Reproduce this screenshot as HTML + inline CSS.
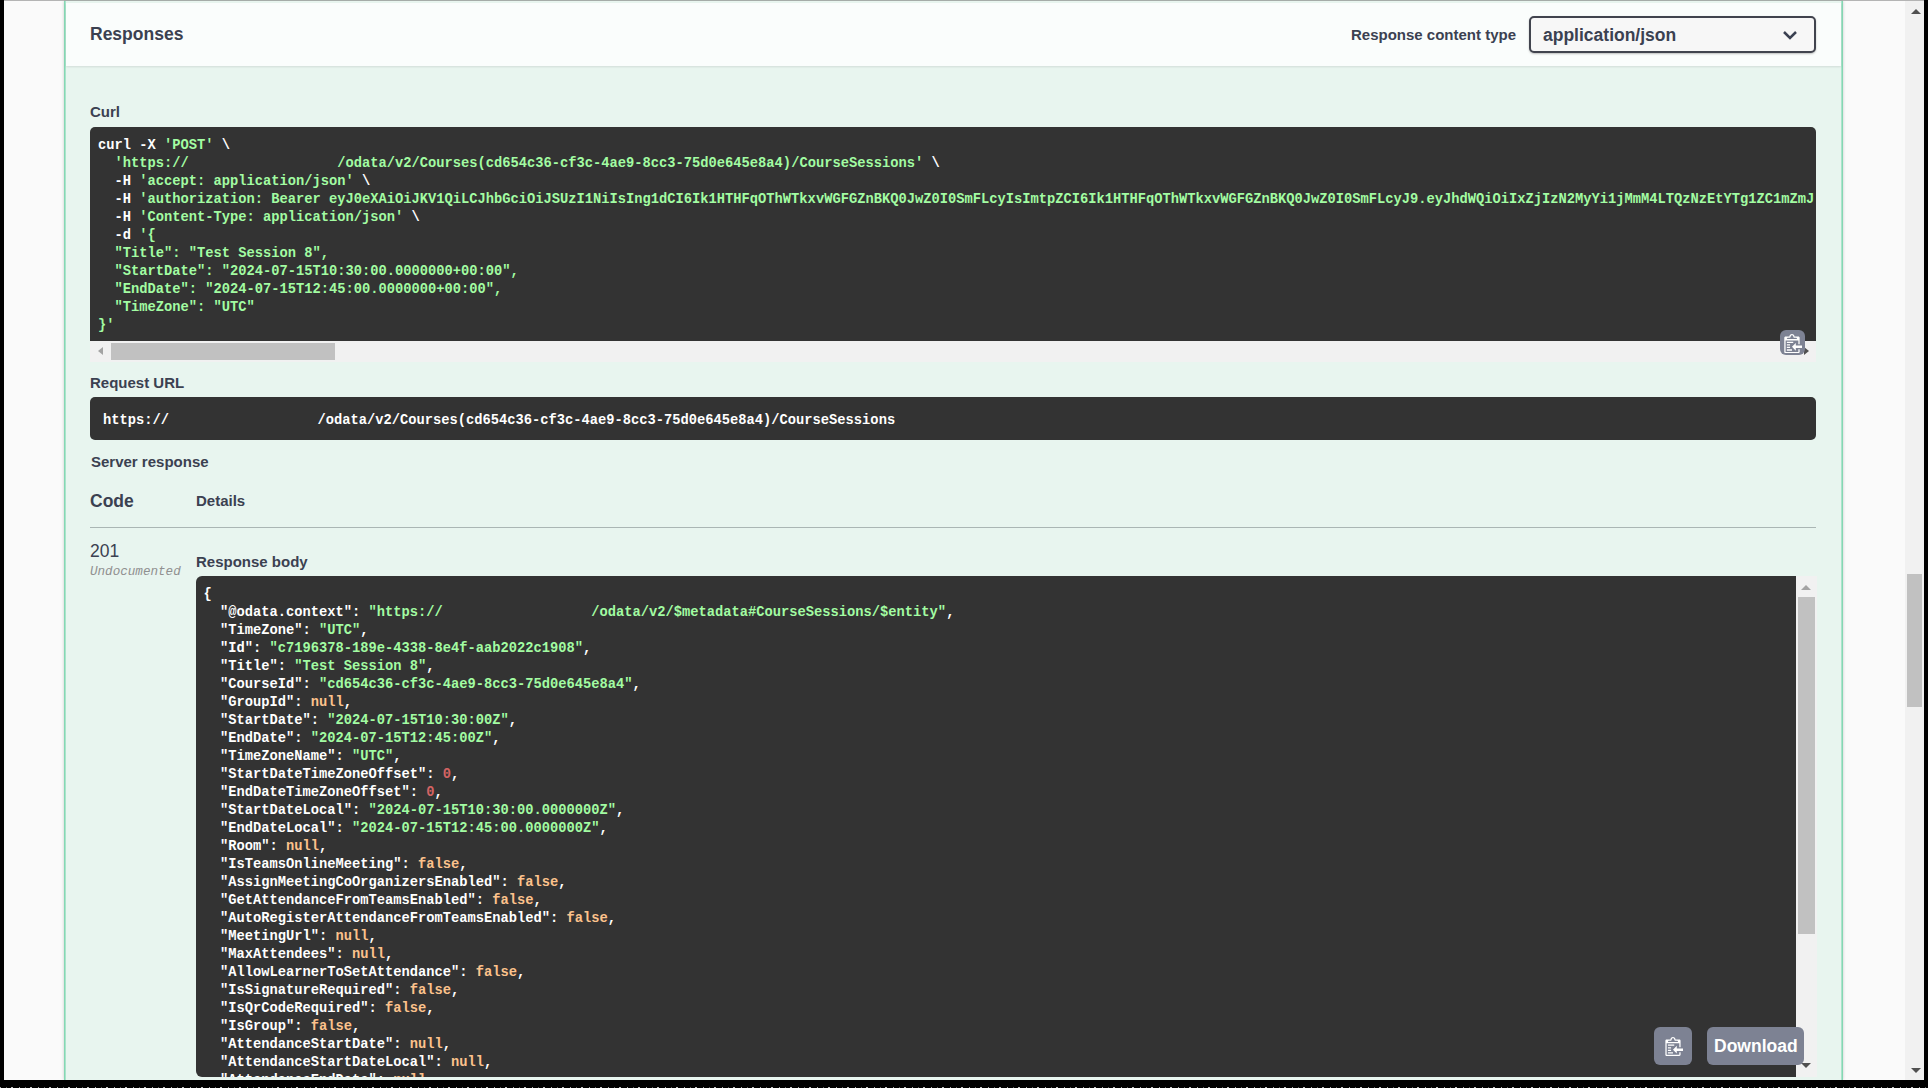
<!DOCTYPE html>
<html><head><meta charset="utf-8">
<style>
*{box-sizing:border-box;margin:0;padding:0}
html,body{width:1928px;height:1088px;overflow:hidden;background:#000}
body{position:relative;font-family:"Liberation Sans",sans-serif;color:#3b4151}
.abs{position:absolute}
#page{left:4px;top:0;width:1920px;height:1080px;background:#fafafa}
#topline{left:4px;top:0;width:1920px;height:1px;background:#b4b4b4}
#opblock{left:64px;top:1px;width:1779px;height:1079px;background:#e8f5ef;border-left:1px solid #85d7b3;border-right:1px solid #85d7b3;box-shadow:0 0 3px rgba(0,0,0,.19),inset 1px 0 0 #a9e4cb,inset -1px 0 0 #a9e4cb}
#hdr{left:66px;top:3px;width:1775px;height:63px;background:#fafdfc;box-shadow:0 1px 2px rgba(0,0,0,.1)}
.h4{position:absolute;font-weight:bold;font-size:15px;white-space:nowrap;line-height:18px}
.code{position:absolute;background:#333;overflow:hidden;font-family:"Liberation Mono",monospace;font-weight:bold;font-size:13.75px;line-height:18px;color:#fff;white-space:pre}
.s{color:#a2fca2}.l{color:#fcc28c}.n{color:#d36363}
.track{position:absolute;background:#f1f1f1}
.thumb{position:absolute;background:#c1c1c1}
.btn{position:absolute;background:#7d8293;border-radius:6px}
.tri{position:absolute;width:0;height:0;border-style:solid}
</style></head><body>
<div id="page" class="abs"></div>
<div id="opblock" class="abs"></div>
<div id="hdr" class="abs"></div>
<div class="h4" style="left:90px;top:25px;font-size:17.5px">Responses</div>
<div class="h4" style="left:1351px;top:26px">Response content type</div>
<div class="abs" style="left:1529px;top:16px;width:287px;height:37px;border:2.5px solid #41444e;border-radius:5px;background:#f7f7f7;box-shadow:0 1px 2px rgba(0,0,0,.25)"></div>
<div class="h4" style="left:1543px;top:25px;font-size:17.5px;line-height:20px">application/json</div>
<svg class="abs" style="left:1782px;top:29px" width="16" height="12" viewBox="0 0 16 12"><path d="M2 3l6 6 6-6" fill="none" stroke="#3b4151" stroke-width="2.5"/></svg>

<div class="h4" style="left:90px;top:103px">Curl</div>
<div class="code" style="left:90px;top:127px;width:1726px;height:213.5px;border-radius:5px 5px 0 0;padding:9.7px 0 0 8px">curl -X <span class=s>'POST'</span> \
  <span class=s>'https://                  /odata/v2/Courses(cd654c36-cf3c-4ae9-8cc3-75d0e645e8a4)/CourseSessions'</span> \
  -H <span class=s>'accept: application/json'</span> \
  -H <span class=s>'authorization: Bearer eyJ0eXAiOiJKV1QiLCJhbGciOiJSUzI1NiIsIng1dCI6Ik1HTHFqOThWTkxvWGFGZnBKQ0JwZ0I0SmFLcyIsImtpZCI6Ik1HTHFqOThWTkxvWGFGZnBKQ0JwZ0I0SmFLcyJ9.eyJhdWQiOiIxZjIzN2MyYi1jMmM4LTQzNzEtYTg1ZC1mZmJ</span>
  -H <span class=s>'Content-Type: application/json'</span> \
  -d <span class=s>'{
  "Title": "Test Session 8",
  "StartDate": "2024-07-15T10:30:00.0000000+00:00",
  "EndDate": "2024-07-15T12:45:00.0000000+00:00",
  "TimeZone": "UTC"
}'</span></div>
<div class="track" style="left:90px;top:340.5px;width:1726px;height:21px"></div>
<div class="thumb" style="left:111px;top:342.5px;width:224px;height:17px"></div>
<div class="tri" style="left:98px;top:347px;border-width:4px 5px 4px 0;border-color:transparent #a3a3a3 transparent transparent"></div>
<div class="tri" style="left:1804px;top:347px;border-width:4px 0 4px 5px;border-color:transparent transparent transparent #505050"></div>
<div class="btn" style="left:1779.5px;top:329.5px;width:25px;height:25px"><svg width="18.5" height="19.2" viewBox="0 1 14 15" style="position:absolute;left:4.25px;top:4.2px"><path fill="#fff" fill-rule="evenodd" d="M2 13h4v1H2v-1zm5-6H2v1h5V7zm2 3V8l-3 3 3 3v-2h5v-2H9zM4.5 9H2v1h2.5V9zM2 12h2.5v-1H2v1zm9 1h1v2c-.02.28-.11.52-.3.7-.19.18-.42.28-.7.3H1c-.55 0-1-.45-1-1V4c0-.55.45-1 1-1h3c0-1.11.89-2 2-2 1.11 0 2 .89 2 2h3c.55 0 1 .45 1 1v5h-1V6H1v9h10v-2zM2 5h8c0-.55-.45-1-1-1H8c-.55 0-1-.45-1-1s-.45-1-1-1-1 .45-1 1-.45 1-1 1H3c-.55 0-1 .45-1 1z"/></svg></div>

<div class="h4" style="left:90px;top:373.5px">Request URL</div>
<div class="code" style="left:90px;top:397px;width:1726px;height:43px;border-radius:5px;padding:14.5px 0 0 13px">https://                  /odata/v2/Courses(cd654c36-cf3c-4ae9-8cc3-75d0e645e8a4)/CourseSessions</div>

<div class="h4" style="left:91px;top:453px">Server response</div>
<div class="h4" style="left:90px;top:492px;font-size:17.5px">Code</div>
<div class="h4" style="left:196px;top:492px">Details</div>
<div class="abs" style="left:90px;top:527px;width:1726px;height:1.25px;background:#aab6b4"></div>
<div class="h4" style="left:90px;top:542px;font-size:17.5px;font-weight:normal">201</div>
<div class="h4" style="left:90px;top:563px;font-family:'Liberation Mono',monospace;font-style:italic;font-weight:normal;font-size:12.6px;color:#909090">Undocumented</div>
<div class="h4" style="left:196px;top:553px">Response body</div>
<div class="code" style="left:196px;top:576px;width:1599.5px;height:500.5px;border-radius:6px 0 0 6px;padding:9.7px 0 0 7.5px">{
  "@odata.context": <span class=s>"https://                  /odata/v2/$metadata#CourseSessions/$entity"</span>,
  "TimeZone": <span class=s>"UTC"</span>,
  "Id": <span class=s>"c7196378-189e-4338-8e4f-aab2022c1908"</span>,
  "Title": <span class=s>"Test Session 8"</span>,
  "CourseId": <span class=s>"cd654c36-cf3c-4ae9-8cc3-75d0e645e8a4"</span>,
  "GroupId": <span class=l>null</span>,
  "StartDate": <span class=s>"2024-07-15T10:30:00Z"</span>,
  "EndDate": <span class=s>"2024-07-15T12:45:00Z"</span>,
  "TimeZoneName": <span class=s>"UTC"</span>,
  "StartDateTimeZoneOffset": <span class=n>0</span>,
  "EndDateTimeZoneOffset": <span class=n>0</span>,
  "StartDateLocal": <span class=s>"2024-07-15T10:30:00.0000000Z"</span>,
  "EndDateLocal": <span class=s>"2024-07-15T12:45:00.0000000Z"</span>,
  "Room": <span class=l>null</span>,
  "IsTeamsOnlineMeeting": <span class=l>false</span>,
  "AssignMeetingCoOrganizersEnabled": <span class=l>false</span>,
  "GetAttendanceFromTeamsEnabled": <span class=l>false</span>,
  "AutoRegisterAttendanceFromTeamsEnabled": <span class=l>false</span>,
  "MeetingUrl": <span class=l>null</span>,
  "MaxAttendees": <span class=l>null</span>,
  "AllowLearnerToSetAttendance": <span class=l>false</span>,
  "IsSignatureRequired": <span class=l>false</span>,
  "IsQrCodeRequired": <span class=l>false</span>,
  "IsGroup": <span class=l>false</span>,
  "AttendanceStartDate": <span class=l>null</span>,
  "AttendanceStartDateLocal": <span class=l>null</span>,
  "AttendanceEndDate": <span class=l>null</span>,
  "AttendanceEndDateLocal": <span class=l>null</span>,</div>
<div class="track" style="left:1795.5px;top:576px;width:21px;height:500.5px"></div>
<div class="thumb" style="left:1797.5px;top:597px;width:17px;height:337px"></div>
<div class="tri" style="left:1801px;top:585px;border-width:0 5px 5px 5px;border-color:transparent transparent #a3a3a3 transparent"></div>
<div class="tri" style="left:1801px;top:1063px;border-width:5px 5px 0 5px;border-color:#505050 transparent transparent transparent"></div>
<div class="btn" style="left:1654px;top:1027px;width:37.5px;height:37.5px"><svg width="18.5" height="19" viewBox="0 1 14 15" style="position:absolute;left:10.5px;top:9.8px"><path fill="#fff" fill-rule="evenodd" d="M2 13h4v1H2v-1zm5-6H2v1h5V7zm2 3V8l-3 3 3 3v-2h5v-2H9zM4.5 9H2v1h2.5V9zM2 12h2.5v-1H2v1zm9 1h1v2c-.02.28-.11.52-.3.7-.19.18-.42.28-.7.3H1c-.55 0-1-.45-1-1V4c0-.55.45-1 1-1h3c0-1.11.89-2 2-2 1.11 0 2 .89 2 2h3c.55 0 1 .45 1 1v5h-1V6H1v9h10v-2zM2 5h8c0-.55-.45-1-1-1H8c-.55 0-1-.45-1-1s-.45-1-1-1-1 .45-1 1-.45 1-1 1H3c-.55 0-1 .45-1 1z"/></svg></div>
<div class="btn" style="left:1707px;top:1027px;width:97px;height:37.5px"></div>
<div class="h4" style="left:1714px;top:1037px;font-size:17.5px;color:#fff">Download</div>

<div class="track" style="left:1905px;top:0;width:19px;height:1080px"></div>
<div class="thumb" style="left:1907px;top:574px;width:15px;height:133px"></div>
<div class="tri" style="left:1910.5px;top:9px;border-width:0 5px 5px 5px;border-color:transparent transparent #505050 transparent"></div>
<div class="tri" style="left:1910.5px;top:1068px;border-width:5px 5px 0 5px;border-color:#505050 transparent transparent transparent"></div>
<div id="topline" class="abs"></div>
<div class="abs" style="left:64px;top:0;width:1779px;height:1px;background:#a5aca8"></div>
<div class="abs" style="left:0;top:1087px;width:1928px;height:1px;background:repeating-linear-gradient(90deg,rgba(230,230,230,.75) 0 1px,transparent 1px 6px,rgba(200,200,200,.5) 6px 7px,transparent 7px 11px,rgba(240,240,240,.8) 11px 13px,transparent 13px 19px)"></div>
</body></html>
